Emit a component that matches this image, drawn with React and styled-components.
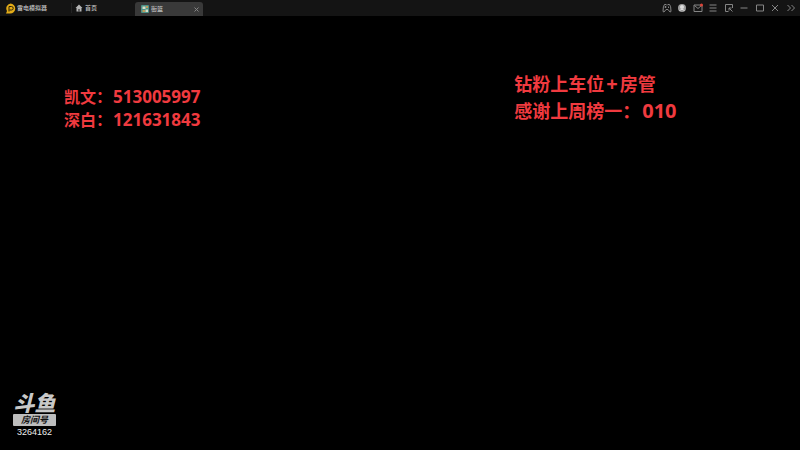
import React from "react";
import styled, { createGlobalStyle } from "styled-components";

const App = () => {
  return (
    <>
      <GlobalStyle />
      <Player>
        <TitleBar>
          <Brand>
            <svg width="11" height="11" viewBox="0 0 22 22">
              <path d="M11 1a10 10 0 1 1-1 20H2l2-5A10 10 0 0 1 11 1z" fill="#e3ac18" />
              <path d="M8 17V7h5a3 3 0 0 1 0 7H9" fill="none" stroke="#2a2108" strokeWidth="2" />
            </svg>
            <span>雷电模拟器</span>
          </Brand>
          <HomeTab type="button">
            <svg width="8" height="8" viewBox="0 0 16 16">
              <path d="M8 1 1 8h2v7h10V8h2z" fill="#b4b4b4" />
              <path d="M7 10h2v5H7z" fill="#141414" />
            </svg>
            首页
          </HomeTab>
          <GameTab>
            <TabName type="button">
              <svg width="8" height="8" viewBox="0 0 16 16">
                <rect width="16" height="16" rx="2" fill="#4c9287" />
                <path d="M3 3h6v5H3zM9 9h5v5H9z" fill="#d8ddc8" />
                <path d="M10 2h4v4h-4zM3 10h5v4H3z" fill="#bd9d5b" />
              </svg>
              街篮
            </TabName>
            <CloseTab type="button" aria-label="关闭标签">
              <svg width="5" height="5" viewBox="0 0 10 10">
                <path d="M1 1l8 8M9 1L1 9" stroke="#858585" strokeWidth="2" />
              </svg>
            </CloseTab>
          </GameTab>
          <Tools>
            <Tool aria-label="手柄">
              <path d="M5 3h3l1 1h2l1-1h3q3 2 3 14l-2 1-4-5H8l-4 5-2-1Q2 5 5 3zM5 8h4M7 6v4M13 7v3" />
            </Tool>
            <Tool aria-label="账号">
              <circle cx="10" cy="10" r="8" fill="#9c9c9c" stroke="none" />
              <path d="M5 15q5-5 10 0" stroke="#dddddd" />
              <circle cx="10" cy="8" r="4" fill="#dddddd" stroke="none" />
            </Tool>
            <Tool aria-label="消息">
              <path d="M2 4h16v13H2zM3 5l7 6 7-6" />
              <circle cx="17" cy="4" r="3" fill="#e04438" stroke="none" />
            </Tool>
            <Tool aria-label="菜单">
              <path d="M3 4h14M3 10h14M3 16h14" />
            </Tool>
            <Tool aria-label="小窗">
              <path d="M9 17H3V3h14v7M10 10l7 7M10 15v-5h5" />
            </Tool>
            <Tool aria-label="最小化">
              <path d="M3 10h14" />
            </Tool>
            <Tool aria-label="最大化">
              <path d="M3 4h14v12H3z" />
            </Tool>
            <Tool aria-label="关闭">
              <path d="M4 4l12 12M16 4L4 16" />
            </Tool>
            <Tool aria-label="展开">
              <path d="M3 4l6 6-6 6M11 4l6 6-6 6" />
            </Tool>
          </Tools>
        </TitleBar>
        <Screen>
          <Notices>
            <Contacts>
              <p>凯文：<Digits>513005997</Digits></p>
              <p>深白：<Digits>121631843</Digits></p>
            </Contacts>
            <Thanks>
              <p>钻粉上车位<Digits>+</Digits>房管</p>
              <p>感谢上周榜一：<Digits>010</Digits></p>
            </Thanks>
          </Notices>
          <Room>
            <Logo>斗鱼</Logo>
            <RoomLabel>房间号</RoomLabel>
            <RoomNumber>3264162</RoomNumber>
          </Room>
        </Screen>
      </Player>
    </>
  );
};

const Tool = ({ children, ...rest }) => (
  <ToolButton type="button" {...rest}>
    <svg width="10" height="10" viewBox="0 0 20 20">{children}</svg>
  </ToolButton>
);

const GlobalStyle = createGlobalStyle`
  * {
    margin: 0;
    padding: 0;
    box-sizing: border-box;
  }
  body {
    background: #000000;
    font-family: "Noto Sans", "Noto Sans CJK SC", sans-serif;
  }
  button {
    border: none;
    background: none;
    color: inherit;
    font: inherit;
    cursor: pointer;
  }
  svg {
    display: block;
    flex: none;
  }
`;

const Player = styled.div`
  display: flex;
  flex-direction: column;
  min-height: 100vh;
`;

const TitleBar = styled.header`
  display: flex;
  align-items: center;
  height: 16px;
  padding-left: 5px;
  background: #141414;
  color: #c4c4c4;
  font-family: "Noto Sans CJK SC", sans-serif;
  font-size: 6px;
  font-weight: 500;
  line-height: 10px;
`;

const Brand = styled.div`
  display: flex;
  align-items: center;
  gap: 1px;
  width: 66px;
`;

const HomeTab = styled.button`
  display: flex;
  align-items: center;
  gap: 2px;
  width: 64px;
  padding-left: 3px;
  border-left: 1px solid #242424;
`;

const GameTab = styled.div`
  display: flex;
  align-items: center;
  justify-content: space-between;
  align-self: flex-end;
  width: 68px;
  height: 14px;
  padding: 0 4px 0 6px;
  border-radius: 3px 3px 0 0;
  background: #393939;
`;

const TabName = styled.button`
  display: flex;
  align-items: center;
  gap: 2px;
`;

const CloseTab = styled.button`
  display: flex;
`;

const Tools = styled.div`
  display: flex;
  justify-content: space-between;
  width: 139px;
  margin-left: auto;
  margin-right: 2px;
`;

const ToolButton = styled.button`
  display: flex;
  align-items: center;
  justify-content: center;
  width: 15px;
  height: 16px;

  svg {
    fill: none;
    stroke: #858585;
    stroke-width: 2;
  }
`;

const Screen = styled.main`
  display: flex;
  flex: 1;
  flex-direction: column;
  justify-content: space-between;
  padding: 54px 8% 12px;
`;

const Notices = styled.section`
  display: grid;
  grid-template-columns: 67% 33%;
  align-items: start;
  color: #f03a3f;
  font-family: "Noto Sans CJK SC", sans-serif;
  font-weight: 700;
  white-space: nowrap;
`;

const Digits = styled.span`
  font-family: "Open Sans", sans-serif;
`;

const Contacts = styled.div`
  padding-top: 15px;
  font-size: 16px;
  line-height: 22px;

  ${Digits} {
    padding-left: 1px;
    font-size: 17px;
  }
`;

const Thanks = styled.div`
  font-size: 18px;
  line-height: 27px;

  ${Digits} {
    padding: 0 2px;
    font-size: 20px;
  }
`;

const Room = styled.aside`
  display: flex;
  flex-direction: column;
  align-items: center;
  align-self: flex-start;
  width: 43px;
  margin-left: -51px;
  color: #c8c8c8;
  font-family: "Liberation Sans", "Noto Sans CJK SC", sans-serif;
`;

const Logo = styled.strong`
  font-size: 21px;
  font-style: italic;
  font-weight: 900;
  line-height: 21px;
`;

const RoomLabel = styled.span`
  width: 100%;
  border-radius: 1px;
  background: #bdbdbd;
  color: #111111;
  font-size: 9px;
  font-style: italic;
  font-weight: 700;
  line-height: 12px;
  text-align: center;
`;

const RoomNumber = styled.span`
  color: #eeeeee;
  font-size: 9px;
  line-height: 12px;
`;

export default App;
